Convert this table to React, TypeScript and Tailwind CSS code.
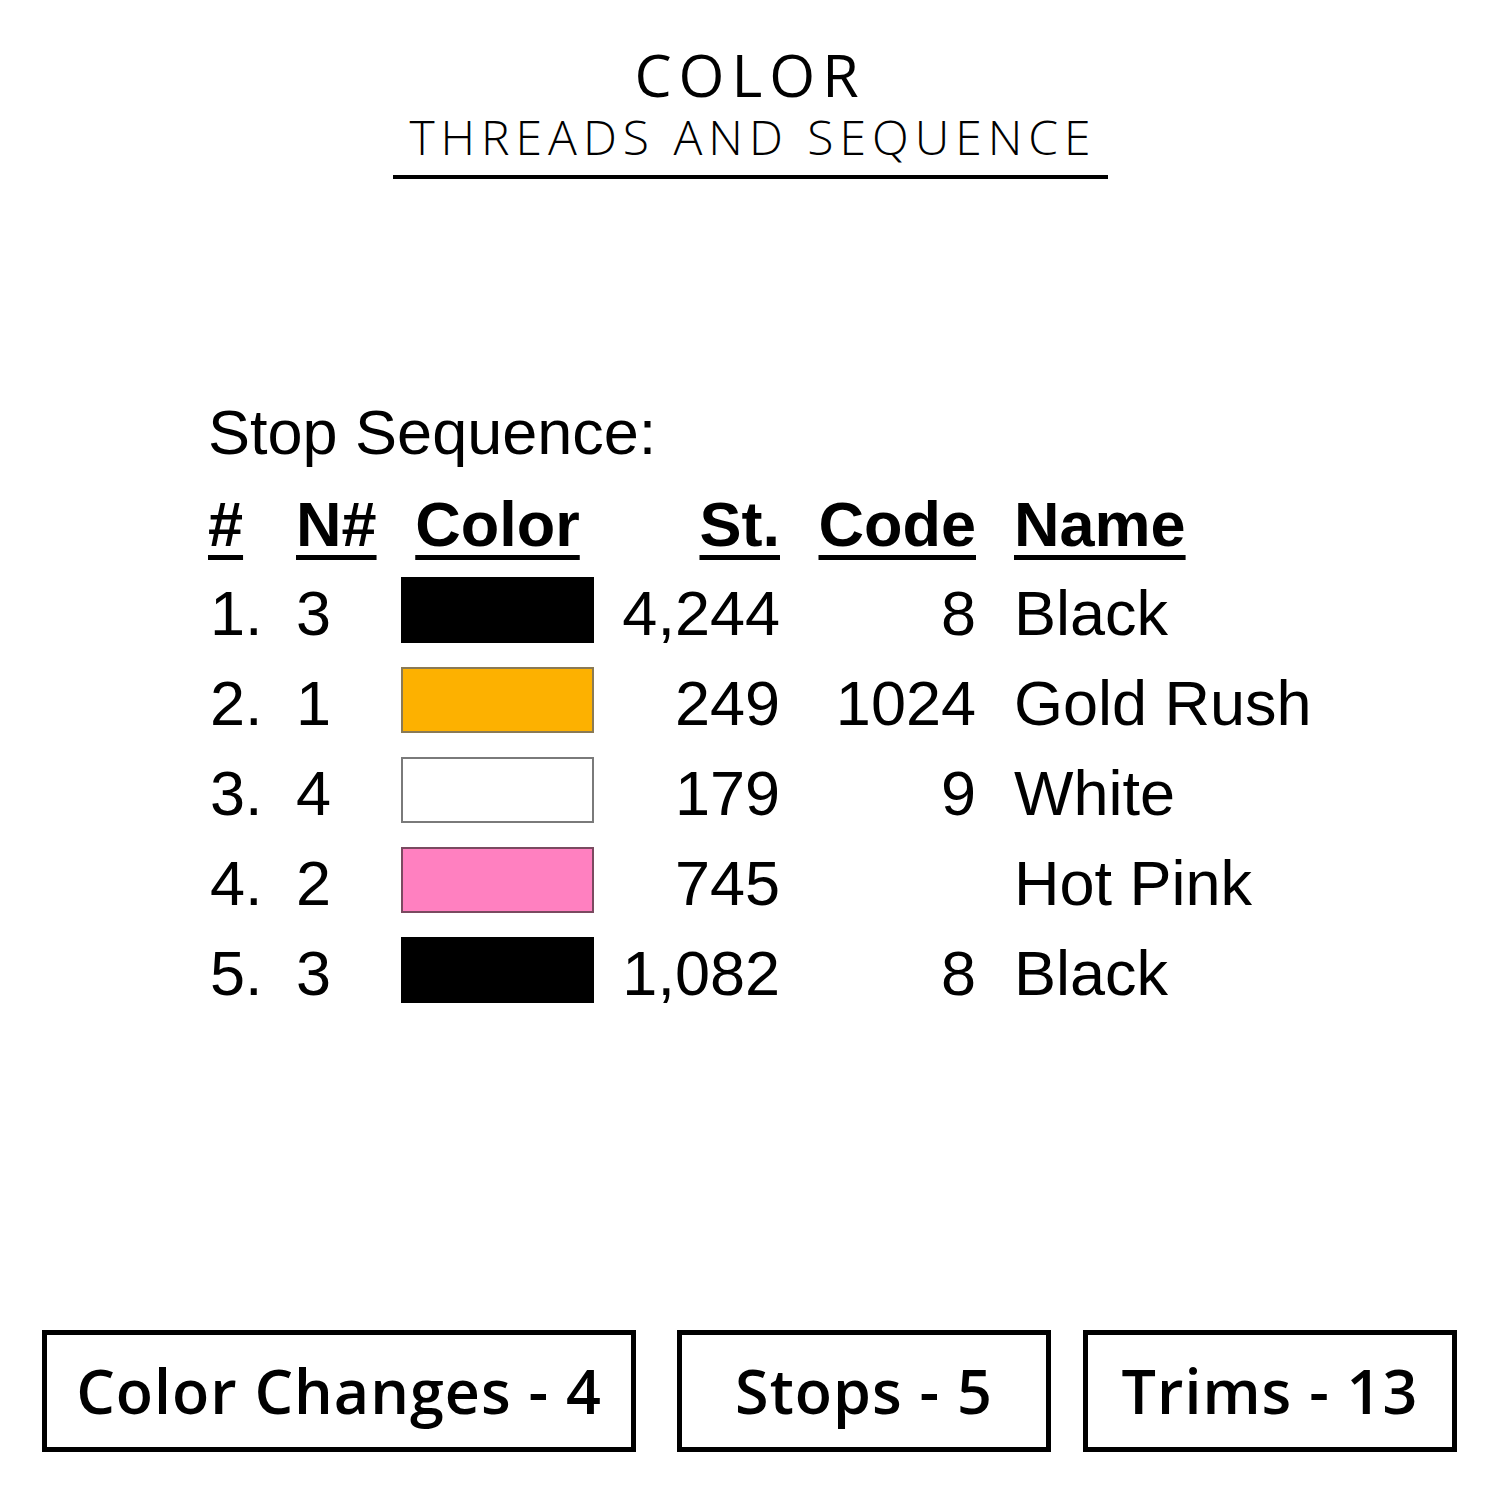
const swatches = [
  { n: '1.', needle: '3', fill: 'bg-black border-black', st: '4,244', code: '8', name: 'Black' },
  { n: '2.', needle: '1', fill: 'bg-[#fdb100] border-[#8a7a55]', st: '249', code: '1024', name: 'Gold Rush' },
  { n: '3.', needle: '4', fill: 'bg-white border-[#7a7a7a]', st: '179', code: '9', name: 'White' },
  { n: '4.', needle: '2', fill: 'bg-[#ff80c0] border-[#7a4a60]', st: '745', code: '', name: 'Hot Pink' },
  { n: '5.', needle: '3', fill: 'bg-black border-black', st: '1,082', code: '8', name: 'Black' },
]

const cols = 'grid grid-cols-[88px_105px_193px_186px_196px_1fr] items-center'

function Header({ children }: { children: React.ReactNode }) {
  return (
    <span className="font-bold underline decoration-[5px] underline-offset-[9px]">
      {children}
    </span>
  )
}

export default function App() {
  return (
    <div className="w-[1500px] h-[1500px] bg-white text-black flex flex-col">
      <div className="flex flex-col items-center pt-[45px] font-['Open_Sans',sans-serif]">
        <h1 className="text-[59px] leading-[59px] font-medium tracking-[7px]">COLOR</h1>
        <h2 className="text-[48px] leading-[48px] font-light tracking-[6px] pl-[6px] mt-[9px]">
          THREADS AND SEQUENCE
        </h2>
        <div className="w-[715px] border-b-[4px] border-black mt-[14px]" />
      </div>

      <div className="ml-[208px] mt-[209px] font-['Liberation_Sans',Arial,sans-serif] text-[63px] leading-[63px]">
        <div className="h-[88px] flex items-center">Stop Sequence:</div>
        <div className={`${cols} h-[88px] mt-[4px]`}>
          <div><Header>#</Header></div>
          <div><Header>N#</Header></div>
          <div className="text-center"><Header>Color</Header></div>
          <div className="text-right"><Header>St.</Header></div>
          <div className="text-right"><Header>Code</Header></div>
          <div className="pl-[38px]"><Header>Name</Header></div>
        </div>
        {swatches.map((r, i) => (
          <div key={i} className={`${cols} h-[90px]`}>
            <div className="pl-[2px]">{r.n}</div>
            <div>{r.needle}</div>
            <div className={`h-[66px] border-[2px] mb-[7px] ${r.fill}`} />
            <div className="text-right">{r.st}</div>
            <div className="text-right">{r.code}</div>
            <div className="pl-[38px]">{r.name}</div>
          </div>
        ))}
      </div>

      <div className="mt-auto mb-[48px] ml-[42px] flex font-['Open_Sans',sans-serif] font-semibold text-[61px] tracking-[1px]">
        <div className="w-[594px] h-[122px] border-[5px] border-black flex items-center justify-center">
          Color Changes - 4
        </div>
        <div className="w-[374px] h-[122px] border-[5px] border-black flex items-center justify-center ml-[41px]">
          Stops - 5
        </div>
        <div className="w-[374px] h-[122px] border-[5px] border-black flex items-center justify-center ml-[32px]">
          Trims - 13
        </div>
      </div>
    </div>
  )
}
